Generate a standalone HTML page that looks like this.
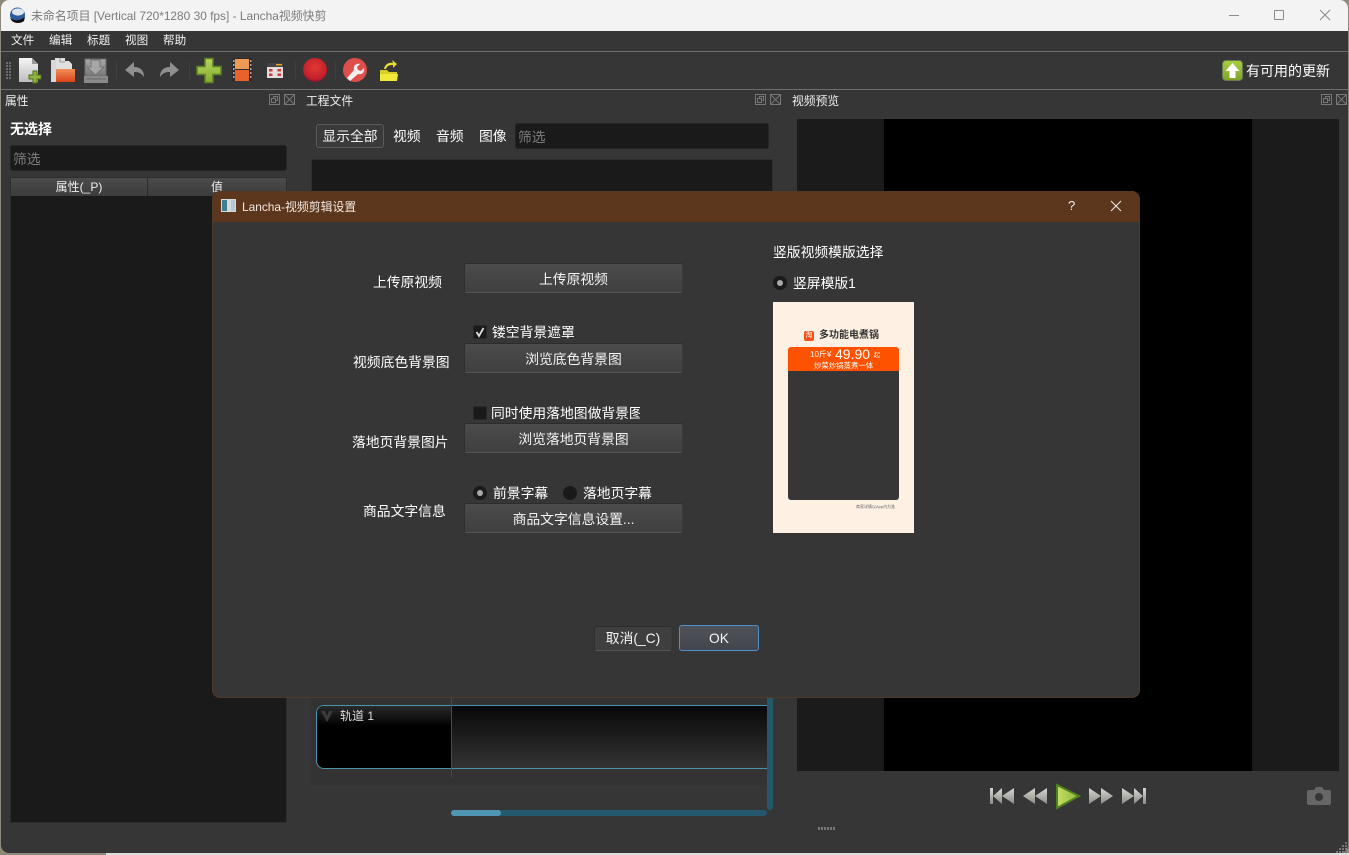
<!DOCTYPE html>
<html><head><meta charset="utf-8">
<style>
html,body{margin:0;padding:0;width:1349px;height:855px;overflow:hidden;background:#8d8878}
*{box-sizing:border-box}
body{font-family:"Liberation Sans","WenQuanYi Zen Hei","Noto Sans CJK SC",sans-serif;color:#fff;font-size:13.8px}
.a{position:absolute}
.t{position:absolute;white-space:nowrap;line-height:18px}
.btn{position:absolute;border:1px solid #555;border-top-color:#2c2c2c;border-left-color:#2f2f2f;border-right-color:#3a3a3a;border-radius:3px;background:linear-gradient(#4c4c4c,#3f3f3f);color:#f4f4f4;text-align:center;font-size:13.8px}
.inp{position:absolute;background:#1a1a1a;border:1px solid #252525;border-radius:3px;color:#7d7d7d}
</style></head><body>
<div class="a" id="win" style="left:1px;top:0;width:1347px;height:853px;background:#363636;border-radius:8px;overflow:hidden">
  <div class="a" style="left:0;top:0;width:1347px;height:31px;background:#f3f3f3"></div>
</div>
<div class="a" style="left:106px;top:853px;width:1243px;height:2px;background:#ddd"></div>

<!-- title -->
<svg class="a" style="left:9px;top:7px" width="17" height="17" viewBox="0 0 17 17"><circle cx="8.5" cy="8" r="7.5" fill="#2a5a9a"/><ellipse cx="9" cy="5" rx="6" ry="3.6" fill="#dfe6ee"/><path d="M1 11c4 3 10 3 15-1l-1 4c-3 2.600-9 2.600-12 0z" fill="#111"/></svg>
<div class="t" style="left:31px;top:7px;font-size:11.9px;color:#7b7b7b">未命名项目 [Vertical 720*1280 30 fps] - Lancha视频快剪</div>
<div class="a" style="left:1229px;top:15px;width:10px;height:1px;background:#8a8a8a"></div>
<div class="a" style="left:1274px;top:10px;width:10px;height:10px;border:1px solid #8a8a8a;border-radius:1px"></div>
<svg class="a" style="left:1319px;top:9px" width="12" height="12"><path d="M1 1l10 10M11 1L1 11" stroke="#888" fill="none"/></svg>

<!-- menu -->
<div class="t" style="left:11px;top:32px;font-size:11.600px;color:#f2f2f2">文件</div>
<div class="t" style="left:49px;top:32px;font-size:11.600px;color:#f2f2f2">编辑</div>
<div class="t" style="left:87px;top:32px;font-size:11.600px;color:#f2f2f2">标题</div>
<div class="t" style="left:125px;top:32px;font-size:11.600px;color:#f2f2f2">视图</div>
<div class="t" style="left:163px;top:32px;font-size:11.600px;color:#f2f2f2">帮助</div>
<div class="a" style="left:1px;top:51px;width:1347px;height:1px;background:#6f6f6f"></div>
<div class="a" style="left:1px;top:89px;width:1347px;height:1px;background:#6f6f6f"></div>

<!-- toolbar -->
<svg class="a" style="left:0;top:52px" width="420" height="37" viewBox="0 0 420 37">
  <defs>
    <linearGradient id="pg" x1="0" y1="0" x2="0" y2="1"><stop offset="0" stop-color="#f6f6f6"/><stop offset="1" stop-color="#bdbdbd"/></linearGradient>
    <linearGradient id="og" x1="0" y1="0" x2="0" y2="1"><stop offset="0" stop-color="#f0905a"/><stop offset="1" stop-color="#d9431a"/></linearGradient>
    <linearGradient id="gg" x1="0" y1="0" x2="0" y2="1"><stop offset="0" stop-color="#b4d65c"/><stop offset="1" stop-color="#86ab30"/></linearGradient>
    <radialGradient id="rg" cx=".5" cy=".4" r=".6"><stop offset="0" stop-color="#e03a35"/><stop offset=".8" stop-color="#c4202a"/><stop offset="1" stop-color="#7d1530"/></radialGradient>
    <linearGradient id="sg" x1="0" y1="0" x2="0" y2="1"><stop offset="0" stop-color="#a8a8a8"/><stop offset="1" stop-color="#777"/></linearGradient>
  </defs>
  <g fill="#6c6c6c"><rect x="6" y="10" width="2" height="2"/><rect x="9" y="10" width="2" height="2"/><rect x="6" y="13" width="2" height="2"/><rect x="9" y="13" width="2" height="2"/><rect x="6" y="16" width="2" height="2"/><rect x="9" y="16" width="2" height="2"/><rect x="6" y="19" width="2" height="2"/><rect x="9" y="19" width="2" height="2"/><rect x="6" y="22" width="2" height="2"/><rect x="9" y="22" width="2" height="2"/><rect x="6" y="25" width="2" height="2"/><rect x="9" y="25" width="2" height="2"/></g>
  <path d="M19 6h13l6 6v18H19z" fill="url(#pg)"/><path d="M32 6v6h6z" fill="#999"/>
  <path d="M33 19h4v4h4v4h-4v4h-4v-4h-4v-4h4z" fill="#8db33a" stroke="#4d6f1d"/>
  <path d="M55 6h10v3h4l3 3v5H55z" fill="#e0e0e0"/><path d="M60 6v4h5" fill="none" stroke="#999"/><path d="M56 17h19v13H56z" fill="url(#og)"/><path d="M51 8h5v22h-5z" fill="#d8d8d8"/>
  <path d="M85 7h21v17H85z" fill="url(#sg)" stroke="#6c6c6c"/><path d="M91 8h9v7h4l-8.500 8-8.500-8h4z" fill="#a6a6a6" stroke="#777"/><path d="M84 24h24v7H84z" fill="#8a8a8a"/><path d="M86 27h20" stroke="#6a6a6a"/>
  <g fill="#404040"><rect x="116" y="10" width="1" height="17"/><rect x="189" y="10" width="1" height="17"/><rect x="295" y="10" width="1" height="17"/><rect x="335" y="10" width="1" height="17"/></g>
  <path d="M125 18l9-8v5c7 0 10 4 10 10-3-4-5-5-10-5v5z" fill="#8f8f8f"/>
  <path d="M179 18l-9-8v5c-7 0-10 4-10 10 3-4 5-5 10-5v5z" fill="#8f8f8f"/>
  <path d="M205 6.500h8v8h8v8h-8v8h-8v-8h-8v-8h8z" fill="url(#gg)" stroke="#5e8224" stroke-width="1.500"/>
  <rect x="232" y="6" width="20" height="23" fill="#2b2b2b"/><rect x="235" y="7" width="14" height="10" fill="#ee9a55"/><rect x="235" y="18" width="14" height="11" fill="#e8622a"/>
  <g fill="#aaa"><rect x="233" y="8" width="1.500" height="2"/><rect x="233" y="12" width="1.500" height="2"/><rect x="233" y="16" width="1.500" height="2"/><rect x="233" y="20" width="1.500" height="2"/><rect x="233" y="24" width="1.500" height="2"/><rect x="250" y="8" width="1.500" height="2"/><rect x="250" y="12" width="1.500" height="2"/><rect x="250" y="16" width="1.500" height="2"/><rect x="250" y="20" width="1.500" height="2"/><rect x="250" y="24" width="1.500" height="2"/></g>
  <rect x="267" y="11" width="16" height="15" fill="#e2dede"/><rect x="267" y="11" width="16" height="4" fill="#444"/><rect x="276" y="12" width="6" height="1.500" fill="#e0a030"/>
  <g fill="#cc3a3a"><rect x="269" y="17" width="3.500" height="2.500"/><rect x="277.500" y="17" width="3.500" height="2.500"/><rect x="269" y="21.500" width="3.500" height="2.500"/><rect x="277.500" y="21.500" width="3.500" height="2.500"/></g>
  <circle cx="315" cy="18" r="12" fill="url(#rg)"/>
  <circle cx="355" cy="18" r="12" fill="#df4f4a"/>
  <path d="M347 26l7-8c-1-4 2-7 6-6l-3 3 1 3 3 1 3-3c1 4-2 7-6 6l-8 7z" fill="#f4eeee"/>
  <path d="M380 18h7l2 2h8v6h-17z" fill="#d8cc28"/><path d="M384 17c1-5 5-7 9-6l-1-3 5 4-4 4v-3c-4 0-6 1-7 4z" fill="#e8dc30"/><path d="M380 22h18l-1 7h-17z" fill="#f2e83a"/>
</svg>

<!-- update -->
<div class="a" style="left:1222px;top:60px;width:21px;height:21px;border-radius:4px;background:linear-gradient(#a8cd3e,#7fa52c);border:1px solid #6a7a50"></div>
<svg class="a" style="left:1222px;top:60px" width="21" height="21"><path d="M10.500 3l7 8h-4v7h-6v-7h-4z" fill="#fff"/></svg>
<div class="t" style="left:1246px;top:62px;font-size:14px">有可用的更新</div>

<!-- left panel -->
<div class="t" style="left:5px;top:92px;font-size:11.800px;color:#f0f0f0">属性</div>
<svg class="a" style="left:269px;top:94px" width="26" height="11"><g fill="none" stroke="#777"><rect x=".5" y=".5" width="10" height="10"/><rect x="2.500" y="4.500" width="4" height="4"/><path d="M4.500 4.500v-2h4v4h-2"/><rect x="15.500" y=".5" width="10" height="10"/><path d="M16 1l9 9M25 1l-9 9"/></g></svg>
<div class="t" style="left:10px;top:120px;font-size:14px;font-weight:bold">无选择</div>
<div class="inp" style="left:10px;top:145px;width:277px;height:26px;padding:5px 2px;line-height:18px">筛选</div>
<div class="a" style="left:10px;top:177px;width:277px;height:646px;background:#1a1a1a;border:1px solid #2e2e2e"></div>
<div class="a" style="left:11px;top:178px;width:137px;height:18px;background:linear-gradient(#4b4b4b,#3c3c3c);border-right:1px solid #2a2a2a;text-align:center;font-size:12px;line-height:18px;color:#eee">属性(_P)</div>
<div class="a" style="left:148px;top:178px;width:138px;height:18px;background:linear-gradient(#4b4b4b,#3c3c3c);text-align:center;font-size:12px;line-height:18px;color:#eee">值</div>

<!-- middle panel -->
<div class="t" style="left:306px;top:92px;font-size:11.800px;color:#f0f0f0">工程文件</div>
<svg class="a" style="left:755px;top:94px" width="26" height="11"><g fill="none" stroke="#777"><rect x=".5" y=".5" width="10" height="10"/><rect x="2.500" y="4.500" width="4" height="4"/><path d="M4.500 4.500v-2h4v4h-2"/><rect x="15.500" y=".5" width="10" height="10"/><path d="M16 1l9 9M25 1l-9 9"/></g></svg>
<div class="btn" style="left:316px;top:124px;width:68px;height:24px;line-height:23px;border-color:#5b5b5b;background:#3a3a3a">显示全部</div>
<div class="t" style="left:393px;top:128px">视频</div>
<div class="t" style="left:436px;top:128px">音频</div>
<div class="t" style="left:479px;top:128px">图像</div>
<div class="inp" style="left:515px;top:123px;width:254px;height:26px;padding:5px 2px;line-height:18px">筛选</div>
<div class="a" style="left:311px;top:159px;width:462px;height:40px;background:#1a1a1a;border:1px solid #2e2e2e"></div>

<!-- timeline -->
<div class="a" style="left:311px;top:695px;width:456px;height:90px;background:#333"></div>
<div class="a" style="left:316px;top:705px;width:452px;height:64px;border:1px solid #4a93ad;border-right:none;border-radius:8px 0 0 8px;background:linear-gradient(#080808,#333);overflow:hidden">
  <div class="a" style="left:0;top:0;width:135px;height:62px;background:#000"></div>
  <div class="a" style="left:0;top:0;width:135px;height:20px;background:linear-gradient(#2a2a2a,#000)"></div>
</div>
<svg class="a" style="left:320px;top:709px" width="14" height="14"><path d="M1 2h4l2 5 2-5h4l-6 11z" fill="#3c3c3c"/></svg>
<div class="t" style="left:340px;top:707px;font-size:12px;color:#ddd">轨道 1</div>
<div class="a" style="left:451px;top:698px;width:1px;height:79px;background:#a8202f"></div>
<div class="a" style="left:767px;top:697px;width:6px;height:113px;background:#24586c;border-radius:0 0 3px 3px"></div>
<div class="a" style="left:451px;top:810px;width:316px;height:6px;background:#24586c;border-radius:3px"></div>
<div class="a" style="left:451px;top:810px;width:50px;height:6px;background:#4f96b4;border-radius:3px"></div>

<!-- right panel -->
<div class="t" style="left:792px;top:92px;font-size:11.800px;color:#f0f0f0">视频预览</div>
<svg class="a" style="left:1321px;top:94px" width="26" height="11"><g fill="none" stroke="#777"><rect x=".5" y=".5" width="10" height="10"/><rect x="2.500" y="4.500" width="4" height="4"/><path d="M4.500 4.500v-2h4v4h-2"/><rect x="15.500" y=".5" width="10" height="10"/><path d="M16 1l9 9M25 1l-9 9"/></g></svg>
<div class="a" style="left:797px;top:119px;width:542px;height:652px;background:#1b1b1b"></div>
<div class="a" style="left:884px;top:119px;width:368px;height:652px;background:#000"></div>

<!-- transport -->
<svg class="a" style="left:985px;top:780px" width="165" height="32" viewBox="0 0 165 32">
  <defs>
    <linearGradient id="tg" x1="0" y1="0" x2="0" y2="1"><stop offset="0" stop-color="#d8d8d2"/><stop offset="1" stop-color="#8c8c86"/></linearGradient>
    <linearGradient id="pl" x1="0" y1="0" x2="1" y2="0"><stop offset="0" stop-color="#c6de64"/><stop offset="1" stop-color="#8fb83a"/></linearGradient>
  </defs>
  <g fill="url(#tg)">
    <path d="M5 8h3v16H5zM17 8v16l-9-8zM29 8v16l-12-8z"/>
    <path d="M38 16l12-8v16zM50 16l12-8v16z"/>
    <path d="M104 8l12 8-12 8zM116 8l12 8-12 8z"/>
    <path d="M137 8l12 8-12 8zM149 8l9 8-9 8zM158 8h3v16h-3z"/>
  </g>
  <path d="M72 5l22 11-22 12z" fill="url(#pl)" stroke="#4f8020" stroke-width="2"/>
</svg>
<svg class="a" style="left:1306px;top:785px" width="26" height="22"><path d="M1 7q0-2 2-2h5l2-3h6l2 3h5q2 0 2 2v11q0 2-2 2H3q-2 0-2-2z" fill="#666"/><circle cx="13" cy="12" r="4" fill="#353535"/></svg>
<div class="a" style="left:818px;top:827px;width:17px;height:3px;background:repeating-linear-gradient(90deg,#777 0 2px,transparent 2px 3px)"></div>
<svg class="a" style="left:1336px;top:841px" width="12" height="12"><g fill="#777"><rect x="9" y="1" width="2" height="2"/><rect x="6" y="4" width="2" height="2"/><rect x="9" y="4" width="2" height="2"/><rect x="3" y="7" width="2" height="2"/><rect x="6" y="7" width="2" height="2"/><rect x="9" y="7" width="2" height="2"/><rect x="0" y="10" width="2" height="2"/><rect x="3" y="10" width="2" height="2"/><rect x="6" y="10" width="2" height="2"/><rect x="9" y="10" width="2" height="2"/></g></svg>

<!-- dialog -->
<div class="a" style="left:212px;top:191px;width:928px;height:507px;background:#363636;border-radius:8px;overflow:hidden;border:1px solid #4f3a28;border-top:none">
  <div class="a" style="left:0;top:0;width:928px;height:31px;background:#5d371d"></div>
</div>
<svg class="a" style="left:221px;top:199px" width="15" height="13"><rect width="15" height="13" fill="#d5dadc"/><rect x="1" y="1" width="5" height="11" fill="#3e7f8f"/><rect x="10" y="1" width="4" height="11" fill="#b8c8cc"/></svg>
<div class="t" style="left:242px;top:198px;font-size:11.900px;color:#f2e8e0">Lancha-视频剪辑设置</div>
<div class="t" style="left:1068px;top:197px;font-size:13px;color:#eee">?</div>
<svg class="a" style="left:1110px;top:200px" width="12" height="12"><path d="M1 1l10 10M11 1L1 11" stroke="#eee" fill="none"/></svg>

<div class="t" style="left:373px;top:274px">上传原视频</div>
<div class="t" style="left:353px;top:354px">视频底色背景图</div>
<div class="t" style="left:352px;top:434px">落地页背景图片</div>
<div class="t" style="left:363px;top:503px">商品文字信息</div>

<div class="btn" style="left:464px;top:263px;width:219px;height:30px;line-height:31px">上传原视频</div>
<div class="btn" style="left:464px;top:343px;width:219px;height:30px;line-height:31px">浏览底色背景图</div>
<div class="btn" style="left:464px;top:423px;width:219px;height:30px;line-height:31px">浏览落地页背景图</div>
<div class="btn" style="left:464px;top:503px;width:219px;height:30px;line-height:31px">商品文字信息设置...</div>

<div class="a" style="left:473px;top:325px;width:14px;height:14px;background:#1a1a1a;border:1px solid #292929"></div>
<svg class="a" style="left:473px;top:325px" width="14" height="14"><path d="M3.500 7l2.500 4 4.500-8" stroke="#ddd" stroke-width="1.800" fill="none"/></svg>
<div class="t" style="left:492px;top:324px">镂空背景遮罩</div>
<div class="a" style="left:473px;top:406px;width:14px;height:14px;background:#1a1a1a;border:1px solid #292929"></div>
<div class="t" style="left:491px;top:405px;width:149px;overflow:hidden">同时使用落地图做背景图</div>
<div class="a" style="left:473px;top:486px;width:14px;height:14px;background:#1a1a1a;border-radius:50%"></div>
<div class="a" style="left:477px;top:490px;width:6px;height:6px;background:#aaa;border-radius:50%"></div>
<div class="t" style="left:493px;top:485px">前景字幕</div>
<div class="a" style="left:563px;top:486px;width:14px;height:14px;background:#1a1a1a;border-radius:50%"></div>
<div class="t" style="left:583px;top:485px">落地页字幕</div>

<div class="t" style="left:773px;top:244px">竖版视频模版选择</div>
<div class="a" style="left:773px;top:276px;width:14px;height:14px;background:#1a1a1a;border-radius:50%"></div>
<div class="a" style="left:777px;top:280px;width:6px;height:6px;background:#aaa;border-radius:50%"></div>
<div class="t" style="left:793px;top:275px">竖屏模版1</div>

<!-- template preview -->
<div class="a" style="left:773px;top:302px;width:141px;height:231px;background:#fef0e3;overflow:hidden">
  <div class="a" style="left:31px;top:29px;width:10px;height:10px;background:#f4511e;border-radius:2px;color:#fff;font-size:7px;line-height:10px;text-align:center">淘</div>
  <div class="t" style="left:46px;top:25px;font-size:10px;font-weight:bold;color:#333">多功能电煮锅</div>
  <div class="a" style="left:15px;top:45px;width:111px;height:24px;background:#ff5200;border-radius:3px 3px 0 0"></div>
  <div class="t" style="left:37px;top:44px;font-size:8px;color:#fff">10斤¥</div>
  <div class="t" style="left:62px;top:43px;font-size:14px;color:#fff">49.90</div>
  <div class="t" style="left:101px;top:45px;font-size:6px;color:#fff">起</div>
  <div class="t" style="left:41px;top:57px;font-size:7.400px;line-height:14px;color:#fff">炒菜炒锅蒸煮一体</div>
  <div class="a" style="left:15px;top:69px;width:111px;height:129px;background:#363636;border-radius:0 0 3px 3px"></div>
  <div class="t" style="left:83px;top:196px;font-size:4px;color:#666">商家详情以App内为准</div>
</div>

<div class="btn" style="left:594px;top:626px;width:78px;height:25px;line-height:24px;background:#3f3f3f">取消(_C)</div>
<div class="btn" style="left:679px;top:625px;width:80px;height:26px;line-height:26px;border-color:#4f8fcf;background:linear-gradient(#4f5259,#43464c)">OK</div>
</body></html>
